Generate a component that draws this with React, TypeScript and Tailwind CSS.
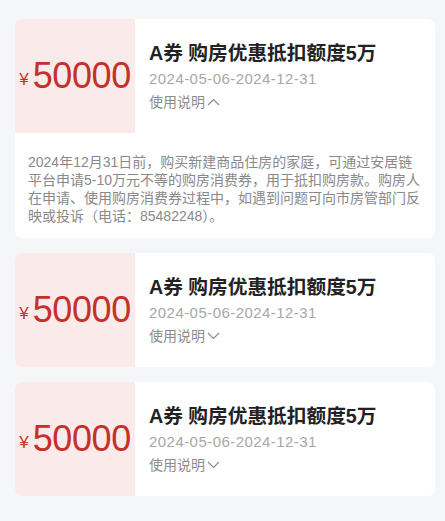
import React from 'react';

const CJK = '"Liberation Sans", "Noto Sans CJK SC", sans-serif';

type Coupon = {
  id: number;
  open: boolean;
};

const coupons: Coupon[] = [
  { id: 1, open: true },
  { id: 2, open: false },
  { id: 3, open: false },
];

const Chevron = ({ up }: { up: boolean }) => (
  <svg width="13" height="8" viewBox="0 0 13 8" className="ml-[2px]">
    <polyline
      points={up ? '1,7 6.5,1.5 12,7' : '1,1 6.5,6.5 12,1'}
      fill="none"
      stroke="#8c8c8c"
      strokeWidth="1.2"
    />
  </svg>
);

const CouponCard = ({ open }: { open: boolean }) => (
  <div className="bg-white rounded-[7px] overflow-hidden">
    <div className="flex">
      <div className="w-[120px] h-[114px] shrink-0 bg-[#fbeaea] flex items-center justify-center text-[#c5302b]">
        <span className="text-[17px] mr-[4px] mt-[7px] leading-none">¥</span>
        <span className="text-[36px] leading-none tracking-[-0.4px]">50000</span>
      </div>
      <div className="flex flex-col justify-center pl-[14px] pt-[1px]">
        <div className="text-[19.7px] font-bold text-[#222] leading-[24px]">A券 购房优惠抵扣额度5万</div>
        <div className="text-[15px] text-[#a8a8a8] leading-[20px] mt-[4px] tracking-[0.45px]">2024-05-06-2024-12-31</div>
        <div className="flex items-center text-[14px] text-[#8c8c8c] leading-[20px] mt-[3px]">
          使用说明
          <Chevron up={open} />
        </div>
      </div>
    </div>
    {open && (
      <div className="px-[13px] pt-[20px] pb-[13px] text-[14px] leading-[18px] text-[#898989]">
        2024年12月31日前，购买新建商品住房的家庭，可通过安居链平台申请5-10万元不等的购房消费券，用于抵扣购房款。购房人在申请、使用购房消费券过程中，如遇到问题可向市房管部门反映或投诉（电话：85482248）。
      </div>
    )}
  </div>
);

export default function App() {
  return (
    <div className="min-h-[521px] bg-[#f4f6f8] pt-[19px] pb-[24px] pl-[15px] pr-[10px]" style={{ fontFamily: CJK }}>
      <div className="flex flex-col gap-[15px]">
        {coupons.map((c) => (
          <CouponCard key={c.id} open={c.open} />
        ))}
      </div>
    </div>
  );
}
